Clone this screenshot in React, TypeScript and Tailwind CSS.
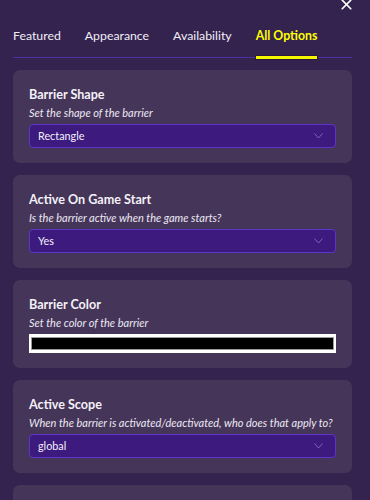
import { X } from 'lucide-react'

interface OptionCardProps {
  title: string
  description: string
  children: React.ReactNode
}

const OptionCard = ({ title, description, children }: OptionCardProps) => {
  return (
    <div className="rounded-[7px] bg-[#453559] px-4 pt-[15px] pb-[15px]">
      <div className="text-[12.6px] font-bold leading-[20px] text-[#f4f1f8]">{title}</div>
      <div className="text-[11px] italic leading-[16px] text-[#ece8f3]">{description}</div>
      <div className="mt-[3px]">{children}</div>
    </div>
  )
}

const SelectBox = ({ value }: { value: string }) => {
  return (
    <div className="flex h-[24px] items-center justify-between rounded-[4px] border border-[#5d35c8] bg-[#3c1a7e] pl-[8px] pr-[12px]">
      <span className="text-[10.8px] leading-none text-[#f3f0fa]">{value}</span>
      {/* 下拉箭头 */}
      <svg width="9" height="6" viewBox="0 0 9 6" fill="none">
        <path d="M0.5 0.5L4.5 5L8.5 0.5" stroke="#7b68b3" strokeWidth="1" />
      </svg>
    </div>
  )
}

const ColorBox = () => {
  return (
    <div className="h-[19px] bg-white px-[2px] py-[3px]">
      <div className="h-full border border-[#9a9a9a] bg-black" />
    </div>
  )
}

const tabs = ['Featured', 'Appearance', 'Availability', 'All Options']

export default function App() {
  const active = 'All Options'

  return (
    <div className="relative h-[500px] w-[370px] overflow-hidden bg-[#34234f] font-['Lato',sans-serif]">
      {/* 关闭按钮 */}
      <button className="absolute right-[15px] top-[-4px] text-white">
        <X size={17} strokeWidth={2.4} />
      </button>

      {/* 标签栏 */}
      <div className="ml-[13px] mr-[18px] flex gap-[24px] border-b border-[#4f2fa6] pt-[28px]">
        {tabs.map((tab) => (
          <div
            key={tab}
            className={`relative pb-[13px] text-[12.3px] leading-[16px] ${
              tab === active ? 'font-bold text-[#ffff00]' : 'text-[#f1eef6]'
            }`}
          >
            {tab}
            {tab === active && (
              <div className="absolute bottom-[-2px] left-0 right-0 h-[3px] bg-[#f5f500] ring-1 ring-[#2a1a3e]" />
            )}
          </div>
        ))}
      </div>

      {/* 选项列表 */}
      <div className="flex flex-col gap-[12px] pl-[13px] pr-[18px] pt-[12px]">
        <OptionCard title="Barrier Shape" description="Set the shape of the barrier">
          <SelectBox value="Rectangle" />
        </OptionCard>
        <OptionCard title="Active On Game Start" description="Is the barrier active when the game starts?">
          <SelectBox value="Yes" />
        </OptionCard>
        <OptionCard title="Barrier Color" description="Set the color of the barrier">
          <ColorBox />
        </OptionCard>
        <OptionCard
          title="Active Scope"
          description="When the barrier is activated/deactivated, who does that apply to?"
        >
          <SelectBox value="global" />
        </OptionCard>
        {/* 下一张卡片，只露出顶部 */}
        <div className="h-[93px] shrink-0 rounded-[7px] bg-[#453559]" />
      </div>
    </div>
  )
}
